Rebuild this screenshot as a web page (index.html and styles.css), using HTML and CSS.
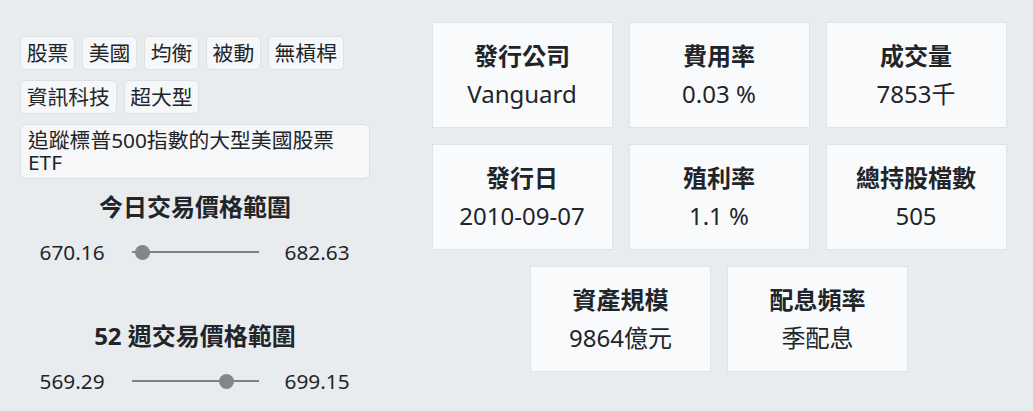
FILE: index.html
```html
<html>
<head>
    <meta charset="utf-8">
    <link rel="stylesheet" href="styles.css">
</head>
<body>
    <div class="page">
        <div class="side">
            <div class="tags">
                <span class="tag">股票</span>
                <span class="tag">美國</span>
                <span class="tag">均衡</span>
                <span class="tag">被動</span>
                <span class="tag">無槓桿</span>
                <span class="tag">資訊科技</span>
                <span class="tag">超大型</span>
            </div>
            <div class="summary">追蹤標普500指數的大型美國股票ETF</div>

            <h3 class="range-title first">今日交易價格範圍</h3>
            <div class="range">
                <span class="range-low">670.16</span>
                <div class="track"><span class="thumb" style="left: 9%"></span></div>
                <span class="range-high">682.63</span>
            </div>

            <h3 class="range-title">52 週交易價格範圍</h3>
            <div class="range">
                <span class="range-low">569.29</span>
                <div class="track"><span class="thumb" style="left: 75%"></span></div>
                <span class="range-high">699.15</span>
            </div>
        </div>

        <div class="stats">
            <div class="stat"><div class="stat-label">發行公司</div><div class="stat-value">Vanguard</div></div>
            <div class="stat"><div class="stat-label">費用率</div><div class="stat-value">0.03 %</div></div>
            <div class="stat"><div class="stat-label">成交量</div><div class="stat-value">7853千</div></div>
            <div class="stat"><div class="stat-label">發行日</div><div class="stat-value">2010-09-07</div></div>
            <div class="stat"><div class="stat-label">殖利率</div><div class="stat-value">1.1 %</div></div>
            <div class="stat"><div class="stat-label">總持股檔數</div><div class="stat-value">505</div></div>
            <div class="stat"><div class="stat-label">資產規模</div><div class="stat-value">9864億元</div></div>
            <div class="stat"><div class="stat-label">配息頻率</div><div class="stat-value">季配息</div></div>
        </div>
    </div>
</body>
</html>
```

FILE: styles.css
```css
body {
    margin: 0;
    background-color: #e9ecef;
    color: #212529;
    font-family: "Noto Sans", "Noto Sans CJK TC", sans-serif;
}
.page {
    display: flex;
    align-items: flex-start;
    padding: 22px 0 0 20px;
}

/* Left column: tags, summary and price ranges */
.side {
    width: 350px;
}
.tags {
    display: flex;
    flex-wrap: wrap;
    gap: 10px 7px;
    margin-top: 14px;
}
.tag {
    font-size: 20.8px;
    line-height: 20px;
    padding: 6px 5.7px;
    background-color: #f6f7f8;
    border: 1px solid #dde1e5;
    border-radius: 5px;
}
.summary {
    margin-top: 10px;
    font-size: 20.8px;
    line-height: 21.5px;
    padding: 5px 7px 5px;
    background-color: #f6f7f8;
    border: 1px solid #dde1e5;
    border-radius: 6px;
}
.range-title {
    margin: 55px 0 0;
    font-size: 24px;
    line-height: 29px;
    font-weight: bold;
    text-align: center;
}
.range-title.first {
    margin-top: 13px;
}
.range {
    display: flex;
    align-items: center;
    justify-content: center;
    gap: 26px;
    margin-top: 17px;
    height: 28px;
    font-size: 20.8px;
}
.range-low, .range-high {
    width: 66px;
}
.track {
    position: relative;
    width: 127px;
    height: 2px;
    background-color: #808080;
}
.thumb {
    position: absolute;
    top: 50%;
    width: 15px;
    height: 15px;
    margin: -7.5px 0 0 -7.5px;
    border-radius: 50%;
    background-color: #858585;
}

/* Right column: stat cards */
.stats {
    display: flex;
    flex-wrap: wrap;
    justify-content: center;
    gap: 16px;
    width: 576px;
    margin-left: 61px;
}
.stat {
    box-sizing: border-box;
    width: 181px;
    height: 106px;
    display: flex;
    flex-direction: column;
    justify-content: center;
    text-align: center;
    background-color: #f9fafb;
    border: 1px solid #dfe2e6;
}
.stat-label {
    font-size: 24px;
    line-height: 38px;
    font-weight: bold;
}
.stat-value {
    font-size: 24px;
    line-height: 38px;
}
```
